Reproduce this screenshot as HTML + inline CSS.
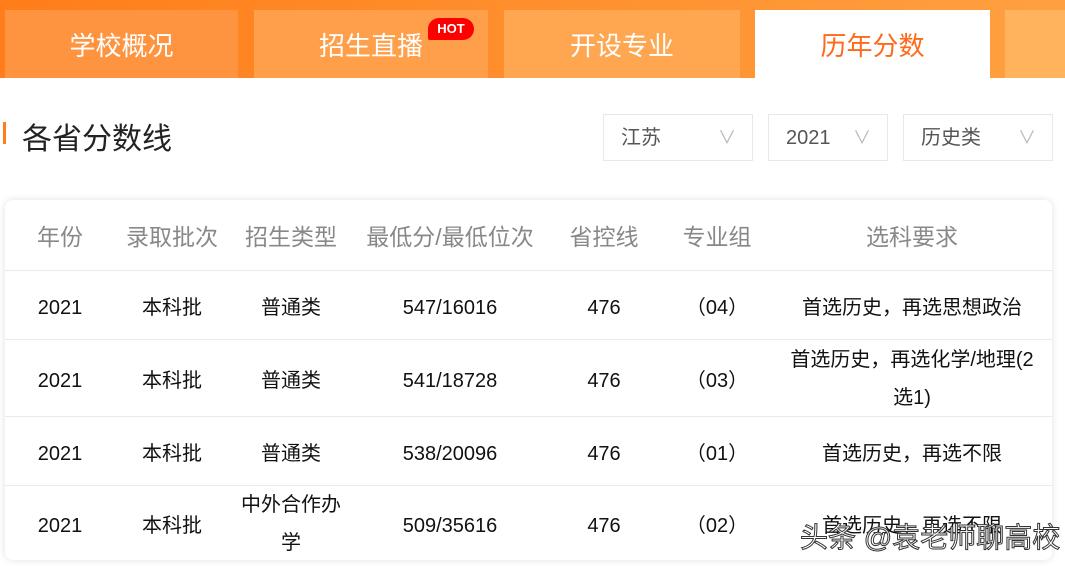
<!DOCTYPE html>
<html><head><meta charset="utf-8"><style>
body{margin:0;width:1065px;height:566px;overflow:hidden;background:#fff;font-family:"Liberation Sans","Noto Sans CJK SC",sans-serif;position:relative}
.top{position:absolute;left:0;top:0;width:1065px;height:78px;background:linear-gradient(90deg,#ff7d1a,#ffa040)}
.tab{position:absolute;top:10px;height:68px;color:#fff;font-size:26px;display:flex;align-items:center;justify-content:center}
.hot{position:absolute;left:428px;top:18px;width:46px;height:22px;background:#f00;border-radius:11px 11px 11px 2px;color:#fff;font-size:13px;font-weight:bold;text-align:center;line-height:22px}
.title{position:absolute;left:22px;top:114px;font-size:30px;color:#222}
.bar{position:absolute;left:3px;top:122px;width:3px;height:22px;background:#ff7d1a}
.sel{position:absolute;top:114px;height:47px;border:1px solid #e8e8e8;box-sizing:border-box;font-size:20px;color:#555;line-height:47px;padding-left:17px}
.sel span{position:absolute;right:16px;top:0;color:#bbb;font-size:18px}
.card{position:absolute;left:5px;top:200px;width:1047px;height:360px;border-radius:8px;box-shadow:0 0 8px rgba(0,0,0,.12);background:#fff;overflow:hidden}
.row{position:absolute;left:0;width:1047px;border-top:1px solid #eaeaea}
.c{position:absolute;top:0;height:100%;display:flex;align-items:center;justify-content:center;text-align:center;font-size:20px;color:#111;transform:translateX(-50%);white-space:nowrap}
.n{padding-top:6px;box-sizing:border-box}
.h .c{color:#888;font-size:23px}
.wm{position:absolute;left:800px;top:516px;font-size:28px;color:#fff;-webkit-text-stroke:1px #333;white-space:nowrap}
</style></head><body>
<div class="top"></div>
<div class="tab" style="left:5px;width:233px;background:#ff9440">学校概况</div>
<div class="tab" style="left:254px;width:234px;background:#ff9f4a">招生直播</div>
<div class="hot">HOT</div>
<div class="tab" style="left:504px;width:236px;background:#ffa650">开设专业</div>
<div class="tab" style="left:755px;width:235px;background:#fff;color:#ff6a1a">历年分数</div>
<div class="tab" style="left:1005px;width:60px;background:#ffb35c"></div>
<div class="bar"></div><div class="title">各省分数线</div>
<div class="sel" style="left:603px;width:150px">江苏<span>∨</span></div>
<div class="sel" style="left:768px;width:120px">2021<span>∨</span></div>
<div class="sel" style="left:903px;width:150px">历史类<span>∨</span></div>
<div class="card">
<div class="row h" style="top:0;height:70px;border:0"><div class="c" style="left:55px">年份</div><div class="c" style="left:167px">录取批次</div><div class="c" style="left:286px">招生类型</div><div class="c" style="left:445px">最低分/最低位次</div><div class="c" style="left:599px">省控线</div><div class="c" style="left:712px">专业组</div><div class="c" style="left:907px">选科要求</div></div>
<div class="row" style="top:70px;height:69px"><div class="c n" style="left:55px">2021</div><div class="c" style="left:167px">本科批</div><div class="c" style="left:286px">普通类</div><div class="c n" style="left:445px">547/16016</div><div class="c n" style="left:599px">476</div><div class="c" style="left:712px">（04）</div><div class="c" style="left:907px">首选历史，再选思想政治</div></div>
<div class="row" style="top:139px;height:77px"><div class="c n" style="left:55px">2021</div><div class="c" style="left:167px">本科批</div><div class="c" style="left:286px">普通类</div><div class="c n" style="left:445px">541/18728</div><div class="c n" style="left:599px">476</div><div class="c" style="left:712px">（03）</div><div class="c" style="left:907px;width:262px;line-height:38px;white-space:normal;word-break:break-all">首选历史，再选化学/地理(2选1)</div></div>
<div class="row" style="top:216px;height:69px"><div class="c n" style="left:55px">2021</div><div class="c" style="left:167px">本科批</div><div class="c" style="left:286px">普通类</div><div class="c n" style="left:445px">538/20096</div><div class="c n" style="left:599px">476</div><div class="c" style="left:712px">（01）</div><div class="c" style="left:907px">首选历史，再选不限</div></div>
<div class="row" style="top:285px;height:75px"><div class="c n" style="left:55px">2021</div><div class="c" style="left:167px">本科批</div><div class="c" style="left:286px;width:110px;line-height:38px;white-space:normal">中外合作办学</div><div class="c n" style="left:445px">509/35616</div><div class="c n" style="left:599px">476</div><div class="c" style="left:712px">（02）</div><div class="c" style="left:907px">首选历史，再选不限</div></div>
</div>
<div class="wm">头条 @袁老师聊高校</div>
</body></html>
